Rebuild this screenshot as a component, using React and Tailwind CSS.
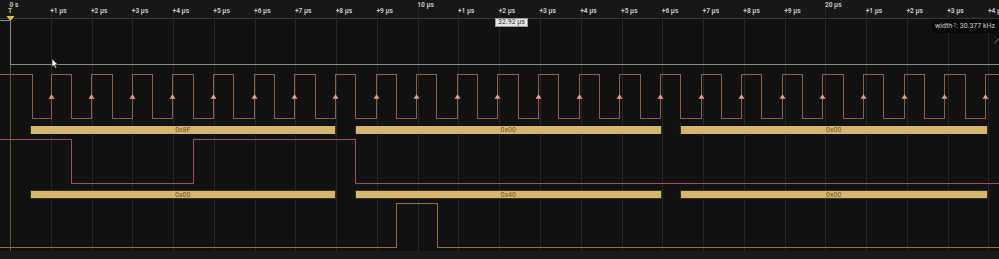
import React from "react";

// logic capture: SPI bus, 3 bytes, trigger at 0 s
const PX_PER_US = 40.77;
const X0 = 10;
const CLK_PERIOD = 40.62;
const FIRST_RISE = 50.6;
const HALF = 20.3;
const W = 999;
const H = 259;

const rise = (k) => FIRST_RISE + CLK_PERIOD * k;
const px = (x) => Math.round(x) + 0.5;

const ticks = Array.from({ length: 25 }, (_, t) => ({
  t,
  x: X0 + PX_PER_US * t,
  major: t % 10 === 0,
  label: t === 0 ? "0 s" : t % 10 === 0 ? `${t} µs` : `+${t % 10} µs`,
}));

const bytes = [
  { mosi: 0x8f, miso: 0x00 },
  { mosi: 0x00, miso: 0x40 },
  { mosi: 0x00, miso: 0x00 },
];

const toBits = (key) =>
  bytes.flatMap((b) => [7, 6, 5, 4, 3, 2, 1, 0].map((i) => (b[key] >> i) & 1));

const hex = (v) => "0x" + v.toString(16).toUpperCase().padStart(2, "0");

function dataPath(bits, yHi, yLo) {
  const y = (b) => (b ? yHi : yLo);
  let d = `M0 ${y(bits[0])}`;
  for (let k = 1; k < bits.length; k++) {
    if (bits[k] !== bits[k - 1]) {
      const x = px(rise(k) - HALF);
      d += ` H${x} V${y(bits[k])}`;
    }
  }
  return d + ` H${W}`;
}

function clockPath(yHi, yLo) {
  let d = `M0 ${yHi} H${px(rise(0) - HALF + 1.5)} V${yLo}`;
  for (let k = 0; k < 24; k++) {
    d += ` H${px(rise(k))} V${yHi}`;
    const f = rise(k) + HALF;
    if (f < W) d += ` H${px(f)} V${yLo}`;
  }
  return d + ` H${W}`;
}

const CH0 = { hi: 20.5, lo: 64.5 };
const CLK = { hi: 74.5, lo: 118.5 };
const MOSI = { hi: 139.5, lo: 183.5 };
const MISO = { hi: 203.5, lo: 247.5 };

function ByteBar({ start, end, y, value }) {
  const w = end - start;
  return (
    <g>
      <rect x={start} y={y} width={w} height={8.5} fill="#d5b76c" stroke="#0c0c0c" strokeWidth="0.8" />
      <text
        x={start + w / 2}
        y={y + 6.6}
        textAnchor="middle"
        fontSize="7"
        fill="#6a5728"
        fontFamily="Roboto, sans-serif"
      >
        {hex(value)}
      </text>
    </g>
  );
}

function Waveforms() {
  const mosiBits = toBits("mosi");
  const misoBits = toBits("miso");
  return (
    <svg width={W} height={H} className="block" shapeRendering="crispEdges">
      <rect x="0" y="0" width={W} height="18" fill="#171717" />
      <rect x="0" y="251" width={W} height="8" fill="#1a1a1a" />
      <line x1="0" y1="18.5" x2={W} y2="18.5" stroke="#363636" />

      {ticks.map((tk) => (
        <line
          key={tk.t}
          x1={px(tk.x)}
          x2={px(tk.x)}
          y1={tk.major ? 7 : 13}
          y2={251}
          stroke="#252525"
        />
      ))}

      {ticks.map((tk) => (
        <text
          key={"l" + tk.t}
          x={tk.x - 0.5}
          y={tk.major ? 6.5 : 12.8}
          fontSize="6.6"
          fontWeight="700"
          fill="#c4c4c4"
          fontFamily="Roboto, sans-serif"
          shapeRendering="auto"
        >
          {tk.label}
        </text>
      ))}

      {/* trigger */}
      <line x1="10.5" x2="10.5" y1="16" y2="251" stroke="#5c5628" />
      <text x="8" y="13.4" fontSize="6.5" fontWeight="700" fill="#e2c23d" fontFamily="Roboto, sans-serif">
        T
      </text>
      <polygon points="6.5,16 14.5,16 10.5,21" fill="#e2c23d" shapeRendering="auto" />

      {/* channel 0 */}
      <path d={`M0 ${CH0.hi} H10.5 V${CH0.lo} H${W}`} fill="none" stroke="#8a8a8a" strokeWidth="1.6" />

      {/* clock */}
      <path d={clockPath(CLK.hi, CLK.lo)} fill="none" stroke="#8e5f4c" strokeWidth="1.3" />
      {Array.from({ length: 24 }, (_, k) => {
        const x = px(rise(k));
        return (
          <polygon
            key={k}
            points={`${x - 3},98.8 ${x + 3},98.8 ${x},94.2`}
            fill="#e8a283"
            shapeRendering="auto"
          />
        );
      })}

      {/* decoded bytes */}
      {bytes.map((b, i) => (
        <ByteBar key={"m" + i} start={Math.round(rise(8 * i) - HALF)} end={Math.round(rise(8 * i + 7)) + 0.5 + i} y={125.8} value={b.mosi} />
      ))}
      {bytes.map((b, i) => (
        <ByteBar key={"s" + i} start={Math.round(rise(8 * i) - HALF)} end={Math.round(rise(8 * i + 7)) + 0.5 + i} y={190.4} value={b.miso} />
      ))}

      <path d={dataPath(mosiBits, MOSI.hi, MOSI.lo)} fill="none" stroke="#a24a60" strokeWidth="1.4" />
      <path d={dataPath(misoBits, MISO.hi, MISO.lo)} fill="none" stroke="#9a6a38" strokeWidth="1.5" />
    </svg>
  );
}

export default function App() {
  return (
    <div className="relative w-[999px] h-[259px] overflow-hidden bg-[#111111] font-['Roboto',sans-serif]">
      <Waveforms />

      <div className="absolute left-[495px] top-[18px] h-[9px] px-[2px] flex items-center whitespace-nowrap bg-[#e4e4e4] border border-[#9a9a9a] text-[7px] leading-none text-[#333333]">
        32.92 µs
      </div>

      <div className="absolute left-[932px] top-[19px] h-[14px] px-[3px] flex items-center whitespace-nowrap rounded-[2px] bg-[#0a0a0a] text-[7px] leading-none text-[#cfcfcf]">
        width<sup className="text-[5px] relative -top-[1px]">-1</sup>: 30.377 kHz
      </div>

      <svg className="absolute left-[51px] top-[58px]" width="8" height="11" viewBox="0 0 8 11">
        <path d="M1 0.8 V9 L3 7.2 L4.4 10.2 L5.6 9.6 L4.3 6.7 H7 Z" fill="#ffffff" stroke="#222222" strokeWidth="0.7" />
      </svg>
      <svg className="absolute left-[994px] top-[38px]" width="5" height="6" viewBox="0 0 5 6">
        <path d="M0.5 5.5 L4.5 0.5" stroke="#9a9a9a" strokeWidth="0.8" />
      </svg>
    </div>
  );
}
